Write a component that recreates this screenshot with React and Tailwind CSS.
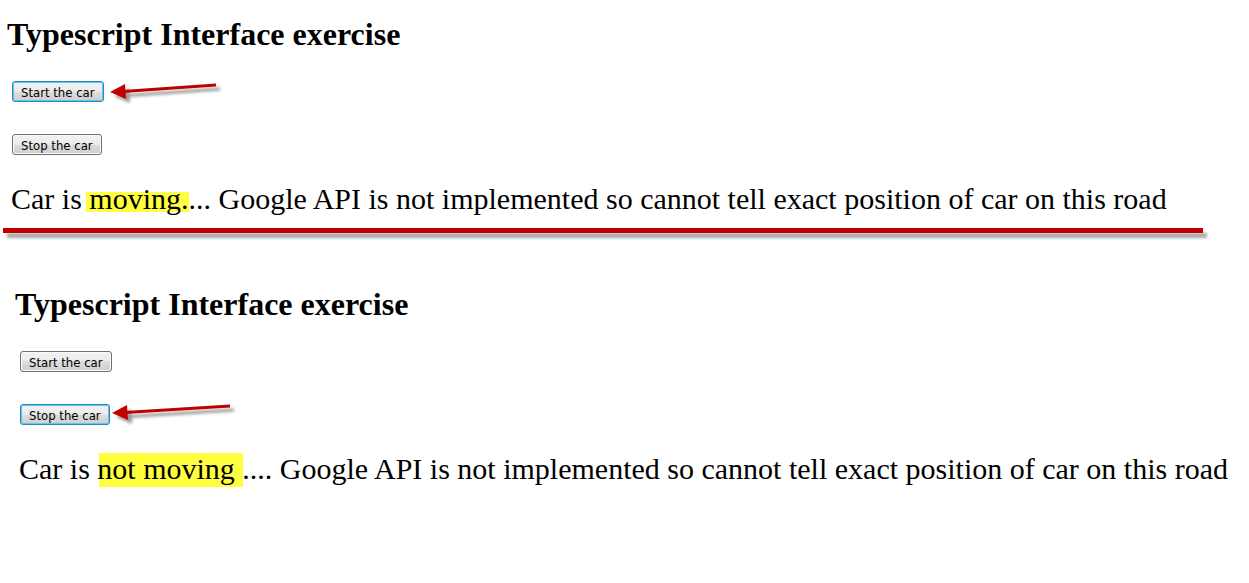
import React from "react";

function Arrow({ id, d, head }) {
  return (
    <svg className="block h-6 w-32 shrink-0" viewBox="0 0 128 24" aria-hidden="true">
      <defs>
        <filter id={id} x="-10%" y="-50%" width="130%" height="250%">
          <feDropShadow dx="4" dy="4" stdDeviation="1.5" floodColor="#000000" floodOpacity="0.4" />
        </filter>
      </defs>
      <g filter={`url(#${id})`}>
        <path d={d} stroke="#c00000" strokeWidth="3" fill="none" />
        <path d={head} fill="#c00000" />
      </g>
    </svg>
  );
}

function CarButton({ active, children }) {
  const edge = active
    ? "border-[#3c7fb1] shadow-[inset_0_0_0_1px_#48d1f8]"
    : "border-[#707070] shadow-[inset_0_0_0_1px_#fafafa]";
  return (
    <button
      type="button"
      className={`h-[21px] shrink-0 rounded-[3px] border bg-linear-[180deg,#f2f2f2_0%,#ebebeb_50%,#dddddd_50%,#cfcfcf_100%] px-2 pt-0.5 font-['DejaVu_Sans_Condensed','DejaVu_Sans',sans-serif] text-[13px] leading-[17px] whitespace-nowrap text-black ${edge}`}
    >
      {children}
    </button>
  );
}

function Highlight({ area, children }) {
  return (
    <span className="relative isolate inline-block">
      <span className={`absolute -z-10 bg-[#ffff40] ${area}`} />
      {children}
    </span>
  );
}

function Exercise({ active, arrow, children }) {
  return (
    <section>
      <h2 className="text-[32px] leading-9 font-bold">Typescript Interface exercise</h2>
      <div className="mt-[29px] flex h-[21px] items-center gap-1.5 pl-[5px]">
        <CarButton active={active === "start"}>Start the car</CarButton>
        {active === "start" && arrow}
      </div>
      <div className="mt-8 flex h-[21px] items-center gap-0.5 pl-[5px]">
        <CarButton active={active === "stop"}>Stop the car</CarButton>
        {active === "stop" && arrow}
      </div>
      <p className="mt-[26px] pl-1 text-[30px] leading-9 whitespace-nowrap">{children}</p>
    </section>
  );
}

export default function App() {
  return (
    <main className="overflow-hidden bg-white pt-4 pb-20 font-['Liberation_Serif',serif] text-black">
      <div className="pl-[7px]">
        <Exercise
          active="start"
          arrow={<Arrow id="start-shadow" d="M13 11.5 L106 5" head="M0 12 L15 4 L16 19 Z" />}
        >
          Car is <Highlight area="-left-[3px] right-0 top-[11px] h-5">moving.</Highlight>... Google API is
          not implemented so cannot tell exact position of car on this road
        </Exercise>
      </div>
      <hr className="mt-[11px] mr-[46px] ml-[3px] h-[5px] border-0 bg-[#c00000] shadow-[4px_5px_3px_rgba(0,0,0,0.35)]" />
      <div className="mt-[53px] pl-[15px]">
        <Exercise
          active="stop"
          arrow={<Arrow id="stop-shadow" d="M13 9.5 L118 3" head="M0 10 L15 2 L16 17 Z" />}
        >
          Car is <Highlight area="left-[2px] -right-2 top-0.5 h-[34px]">not moving</Highlight> .... Google API
          is not implemented so cannot tell exact position of car on this road
        </Exercise>
      </div>
    </main>
  );
}
